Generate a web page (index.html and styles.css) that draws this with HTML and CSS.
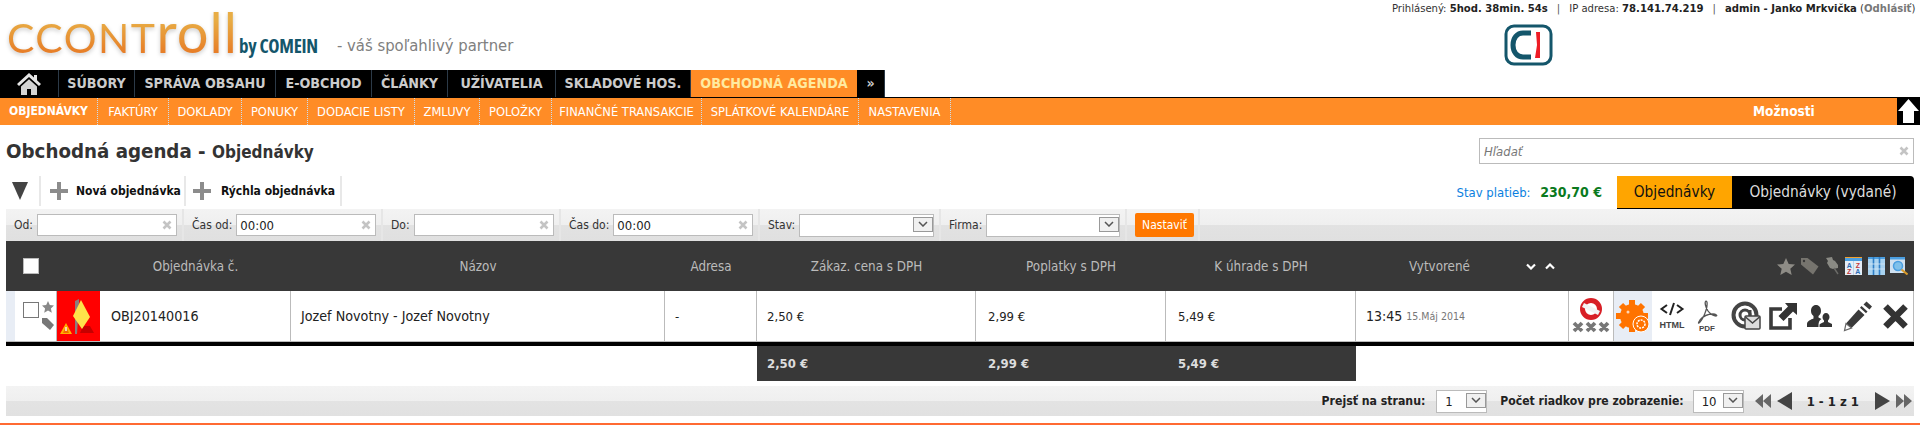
FILE: index.html
```html
<!DOCTYPE html>
<html lang="sk">
<head>
<meta charset="utf-8">
<title>Obchodná agenda - Objednávky</title>
<link rel="stylesheet" href="styles.css">
</head>
<body>
<header class="top">
  <div class="brand">
    <div class="logo"><span class="logo-caps">CCONT</span><span class="logo-low">roll</span></div>
    <div class="by">by COMEIN</div>
    <div class="tagline">- váš spoľahlivý partner</div>
  </div>
  <div class="top-right">
    <div class="session">Prihlásený: <b>5hod. 38min. 54s</b><i>|</i>IP adresa: <b>78.141.74.219</b><i>|</i><b>admin - Janko Mrkvička</b> (<a>Odhlásiť</a>)</div>
    <svg class="ci" viewBox="0 0 49 42"><rect x="2" y="2" width="45" height="38" rx="8" fill="#fff" stroke="#14566b" stroke-width="3"/><path d="M27 9H19C13 9 9 14 9 21s4 12 10 12h8" fill="none" stroke="#14566b" stroke-width="5"/><path d="M32 8h4v26h-5l2-13z" fill="#ee1c25"/></svg>
  </div>
</header>

<nav class="mainnav">
  <a class="m home"><svg viewBox="0 0 26 24" width="26" height="24"><path d="M13 1 1 12l2 2 10-9 10 9 2-2-4-3.700V3h-3v2.500z" fill="#e6e6e6"/><path d="M5 14.500 13 7.300l8 7.200V23h-6v-6h-4v6H5z" fill="#d4d4d4"/></svg></a>
  <a class="m w1">SÚBORY</a>
  <a class="m w2">SPRÁVA OBSAHU</a>
  <a class="m w3">E-OBCHOD</a>
  <a class="m w4">ČLÁNKY</a>
  <a class="m w5">UŽÍVATELIA</a>
  <a class="m w6">SKLADOVÉ HOS.</a>
  <a class="m w7 on">OBCHODNÁ AGENDA</a>
  <a class="m w8">»</a>
</nav>
<nav class="subnav">
  <a class="s bold s1">OBJEDNÁVKY</a>
  <a class="s s2">FAKTÚRY</a>
  <a class="s s3">DOKLADY</a>
  <a class="s s4">PONUKY</a>
  <a class="s s5">DODACIE LISTY</a>
  <a class="s s6">ZMLUVY</a>
  <a class="s s7">POLOŽKY</a>
  <a class="s s8">FINANČNÉ TRANSAKCIE</a>
  <a class="s s9">SPLÁTKOVÉ KALENDÁRE</a>
  <a class="s s10">NASTAVENIA</a>
  <span class="options">Možnosti</span>
  <span class="uparrow"><svg viewBox="0 0 23 27" width="23" height="27"><path d="M11.500 1 22 13h-5v12H6V13H1z" fill="#fff"/></svg></span>
</nav>

<main class="page">
  <div class="titlerow">
    <h1>Obchodná agenda - <small>Objednávky</small></h1>
    <div class="search"><input class="search-input" placeholder="Hľadať"><svg class="clear" viewBox="0 0 10 10"><path d="M1.500 1.500l7 7m0-7-7 7" stroke="#c4c4c4" stroke-width="2.600"/></svg></div>
  </div>

  <div class="toolbar">
    <span class="tool t0"><svg viewBox="0 0 16 18" width="16" height="18"><path d="M0 0h16L8 18z" fill="#444"/></svg></span>
    <a class="tool t1"><svg viewBox="0 0 18 18" width="18" height="18"><path d="M7 0h4v7h7v4h-7v7H7v-7H0V7h7z" fill="#8c8c8c"/></svg><b>Nová objednávka</b></a>
    <a class="tool t2"><svg viewBox="0 0 18 18" width="18" height="18"><path d="M7 0h4v7h7v4h-7v7H7v-7H0V7h7z" fill="#8c8c8c"/></svg><b>Rýchla objednávka</b></a>
    <div class="balance">Stav platieb: <b>230,70 €</b></div>
    <div class="tabs"><a class="tab tab-on">Objednávky</a><a class="tab tab-off">Objednávky (vydané)</a></div>
  </div>

  <div class="filters">
    <label class="f f1">Od:<span class="inp"><input><svg class="clear" viewBox="0 0 10 10"><path d="M1.500 1.500l7 7m0-7-7 7" stroke="#c4c4c4" stroke-width="2.600"/></svg></span></label>
    <label class="f f2">Čas od:<span class="inp"><input value="00:00"><svg class="clear" viewBox="0 0 10 10"><path d="M1.500 1.500l7 7m0-7-7 7" stroke="#c4c4c4" stroke-width="2.600"/></svg></span></label>
    <label class="f f3">Do:<span class="inp"><input><svg class="clear" viewBox="0 0 10 10"><path d="M1.500 1.500l7 7m0-7-7 7" stroke="#c4c4c4" stroke-width="2.600"/></svg></span></label>
    <label class="f f4">Čas do:<span class="inp"><input value="00:00"><svg class="clear" viewBox="0 0 10 10"><path d="M1.500 1.500l7 7m0-7-7 7" stroke="#c4c4c4" stroke-width="2.600"/></svg></span></label>
    <label class="f f5">Stav:<span class="sel wide"><select></select><span class="arr"><svg viewBox="0 0 10 6" width="10" height="6"><path d="M1 1l4 4 4-4" fill="none" stroke="#555" stroke-width="1.500"/></svg></span></span></label>
    <label class="f f6">Firma:<span class="sel wide"><select></select><span class="arr"><svg viewBox="0 0 10 6" width="10" height="6"><path d="M1 1l4 4 4-4" fill="none" stroke="#555" stroke-width="1.500"/></svg></span></span></label>
    <div class="f f7"><button class="set">Nastaviť</button></div>
  </div>

  <div class="grid head">
    <div class="cell c-check"><span class="hcheck"></span></div>
    <div class="cell"></div>
    <div class="cell center">Objednávka č.</div>
    <div class="cell center">Názov</div>
    <div class="cell center">Adresa</div>
    <div class="cell center">Zákaz. cena s DPH</div>
    <div class="cell center">Poplatky s DPH</div>
    <div class="cell center">K úhrade s DPH</div>
    <div class="cell created">Vytvorené
      <span class="sort"><svg viewBox="0 0 10 7" width="10" height="7"><path d="M1 1.500l4 4 4-4" fill="none" stroke="#fff" stroke-width="2.200"/></svg><svg viewBox="0 0 10 7" width="10" height="7"><path d="M1 5.500l4-4 4 4" fill="none" stroke="#fff" stroke-width="2.200"/></svg></span>
    </div>
    <div class="cell hicons">
      <svg class="hi1" viewBox="0 0 18 17" width="18" height="17"><path d="M9 0l2.700 6 6.300.6-4.700 4.200 1.400 6.200L9 13.800 3.300 17l1.400-6.200L0 6.600 6.300 6z" fill="#8e8c86"/></svg>
      <svg class="hi2" viewBox="0 0 19 17" width="19" height="17"><path d="M1 0h6.500L18.500 8.500 13 16.500 1 6.500z" fill="#76746e"/><circle cx="4" cy="3" r="1.200" fill="#383838"/></svg>
      <svg class="hi3" viewBox="0 0 16 18" width="16" height="18"><path d="M1 1l6-1 1 3 2 1 3 4v3l-5 1-3-1-3-5 1-2z" fill="#8a8a84"/><path d="M9 11l4 6" stroke="#6c6c68" stroke-width="1.400"/></svg>
      <svg class="hi4" viewBox="0 0 17 18" width="17" height="18"><rect width="17" height="18" fill="#e6eef7"/><rect width="17" height="4" fill="#4a9ee0"/><rect y="0" width="17" height="1" fill="#f0a030"/><rect x="8" y="4" width="1" height="14" fill="#b9d2e8"/><text class="az blue" x="4.200" y="10.500">A</text><text class="az red" x="12.800" y="10.500">Z</text><text class="az red" x="4.200" y="17">Z</text><text class="az blue" x="12.800" y="17">A</text></svg>
      <svg class="hi5" viewBox="0 0 17 18" width="17" height="18"><rect width="17" height="18" fill="#a9d3f0"/><rect width="17" height="2" fill="#4a9ee0"/><path d="M5.500 0v18M11.500 0v18" stroke="#2f7fc6" stroke-width="1.600"/><path d="M0 7h17M0 12h17" stroke="#d6e8f6" stroke-width=".8"/></svg>
      <svg class="hi6" viewBox="0 0 18 18" width="18" height="18"><rect width="15" height="16" fill="#cfe0f0"/><rect width="15" height="2.500" fill="#4a9ee0"/><circle cx="8" cy="9" r="4.500" fill="#7fc0ea" stroke="#4a9ee0" stroke-width="1.500"/><path d="M11.500 12.500l6 5" stroke="#d89a2a" stroke-width="2"/></svg>
    </div>
  </div>

  <div class="grid row">
    <div class="cell c-check2">
      <span class="rcheck"></span>
      <span class="marks">
        <svg viewBox="0 0 12 12" width="12" height="12"><path d="M6 0l1.800 4 4.200.5-3.100 2.900.9 4.300L6 9.500 2.200 11.700l.9-4.300L0 4.500 4.200 4z" fill="#888"/></svg>
        <svg viewBox="0 0 12 14" width="12" height="14"><path d="M0 1h5l7 7-4 5-8-7z" fill="#777"/></svg>
      </span>
    </div>
    <div class="cell flag"><svg viewBox="0 0 43 50" width="43" height="50">
      <path d="M23 42h14l-4-7-7 0z" fill="#c60000"/>
      <path d="M18 43V10l4-2v4l-2 31z" fill="#8c7d7d"/>
      <path d="M24 9l9 17-8 12-9-13z" fill="#ffe24a"/>
      <path d="M9 32l6 11H3z" fill="#ffb100"/><path d="M9 35l3 7H6z" fill="#f26a00"/><path d="M8.300 36h1.400v4H8.300z" fill="#fff"/>
    </svg></div>
    <div class="cell text line pad big">OBJ20140016</div>
    <div class="cell text line pad2 big">Jozef Novotny - Jozef Novotny</div>
    <div class="cell text line pad2">-</div>
    <div class="cell text line pad3">2,50 €</div>
    <div class="cell text line pad3b">2,99 €</div>
    <div class="cell text line pad3b">5,49 €</div>
    <div class="cell text line pad4"><span class="time">13:45</span> <span class="date">15.Máj 2014</span></div>
    <div class="cell actions">
      <span class="act a0"><svg viewBox="0 0 38 36" width="38" height="36"><circle cx="19" cy="11" r="8.500" fill="none" stroke="#d81f26" stroke-width="5"/><path d="M11 7l16 8" stroke="#f2f2f2" stroke-width="4.500"/><g stroke="#777" stroke-width="3.800"><path d="M2 25l8 8m0-8-8 8M15 25l8 8m0-8-8 8M28 25l8 8m0-8-8 8"/></g></svg></span>
      <span class="act a1"><svg viewBox="0 0 34 34" width="34" height="34"><circle cx="16" cy="17" r="12" fill="#ff7300"/><g stroke="#ff7300" stroke-width="6"><path d="M16 1v32M0 17h32M5 6l22 22M27 6 5 28"/></g><circle cx="25" cy="25" r="8" fill="#ff7300" stroke="#fff"/><circle cx="25" cy="25" r="4" fill="none" stroke="#fff" stroke-width="1.500" stroke-dasharray="2 1"/><circle cx="12" cy="13" r="1.500" fill="#fff" opacity=".7"/></svg></span>
      <span class="act a2"><svg viewBox="0 0 26 30" width="26" height="30"><path d="M8 4 2.500 8 8 12M18 4l5.500 4L18 12M15 2l-4 12" fill="none" stroke="#222" stroke-width="2"/><text x="13" y="27" class="itxt html">HTML</text></svg></span>
      <span class="act a3"><svg viewBox="0 0 22 32" width="22" height="32"><path d="M10 1c-2 1 0 7 2 10 2 3 6 5 8 5s0-2-3-2-9 1-13 6c-2 3-2 4 0 2 3-3 8-14 7-20z" fill="none" stroke="#555" stroke-width="1.300"/><text x="11" y="31" class="itxt pdf">PDF</text></svg></span>
      <span class="act a4"><svg viewBox="0 0 30 30" width="30" height="30"><circle cx="14" cy="14" r="11.500" fill="none" stroke="#444" stroke-width="4"/><circle cx="14" cy="14" r="5" fill="none" stroke="#444" stroke-width="3"/><path d="M19 9v9" stroke="#444" stroke-width="3"/><rect x="14" y="15" width="15" height="13" rx="1" fill="#ddd" stroke="#444" stroke-width="1.500"/><path d="M14.500 16l7 6 7-6" fill="none" stroke="#444" stroke-width="1.500"/></svg></span>
      <span class="act a5"><svg viewBox="0 0 28 28" width="28" height="28"><path d="M13 7H2v19h19V16" fill="none" stroke="#3a3a3a" stroke-width="3.600"/><path d="M16 1h12v12l-4-3.500-9.500 9.500-5-5L19 4.500z" fill="#333"/></svg></span>
      <span class="act a6"><svg viewBox="0 0 25 22" width="25" height="22"><path d="M9 0c3 0 5 2.500 5 6 0 2-1 4-2.500 5v1.500l3 1.500c-2 1-3 3-3 6v2H0v-3c0-3 4-4.500 6.500-5.500V11C5 10 4 8 4 6c0-3.500 2-6 5-6z" fill="#333"/><path d="M19 8c2 0 3.500 1.700 3.500 4 0 1.500-.7 2.700-1.500 3.500V17l4 2v3H12.500v-2c0-1 1-1.500 4.500-3v-1.500C16 14.700 15.500 13.500 15.500 12c0-2.300 1.500-4 3.500-4z" fill="#333"/></svg></span>
      <span class="act a7"><svg viewBox="0 0 30 32" width="30" height="32"><path d="M23.500 1.500l5.500 5-2.500 3-6-5z" fill="#3a3a3a"/><path d="M18.500 6l6 5.500-1.500 1.700-6-5.500z" fill="#3a3a3a"/><path d="M15.500 9.500l6 5.500L8.500 28l-5.500-4.500z" fill="#3a3a3a"/><path d="M3 23.500l5.500 4.500-7 2.500z" fill="#fff" stroke="#666" stroke-width="1.200"/></svg></span>
      <span class="act a8"><svg viewBox="0 0 27 27" width="27" height="27"><path d="M3.500 3.500l20 20m0-20-20 20" stroke="#333" stroke-width="6.500"/></svg></span>
    </div>
  </div>
  <div class="rowend"></div>

  <div class="grid totals">
    <div class="tot-gap"></div>
    <div class="tot">2,50 €</div>
    <div class="tot tot2">2,99 €</div>
    <div class="tot tot2">5,49 €</div>
  </div>

  <div class="pager">
    <b class="goto">Prejsť na stranu:</b>
    <span class="sel small"><select><option>1</option></select><span class="arr"><svg viewBox="0 0 10 6" width="10" height="6"><path d="M1 1l4 4 4-4" fill="none" stroke="#555" stroke-width="1.500"/></svg></span></span>
    <b class="rows">Počet riadkov pre zobrazenie:</b>
    <span class="sel small"><select><option>10</option></select><span class="arr"><svg viewBox="0 0 10 6" width="10" height="6"><path d="M1 1l4 4 4-4" fill="none" stroke="#555" stroke-width="1.500"/></svg></span></span>
    <svg class="pg-first" viewBox="0 0 38 18" width="38" height="18"><path d="M0 9l8-7v14zM8 9l8-7v14z" fill="#666"/><path d="M22 9l15-9v18z" fill="#444"/></svg>
    <b class="count">1 - 1 z 1</b>
    <svg viewBox="0 0 38 18" width="38" height="18"><path d="M1 0l15 9-15 9z" fill="#444"/><path d="M22 2l8 7-8 7zM30 2l8 7-8 7z" fill="#666"/></svg>
  </div>
</main>
<div class="footline"></div>
</body>
</html>
```
FILE: styles.css
```css
* { box-sizing: border-box; }
html, body { margin: 0; padding: 0; background: #fff; height: 429px; overflow: hidden; }
body { font-family: "DejaVu Sans", "Liberation Sans", sans-serif; font-stretch: condensed; font-size: 12px; color: #222; }
a { text-decoration: none; color: inherit; }

.top { height: 70px; display: flex; justify-content: space-between; }
.brand { flex: 1; display: flex; align-items: flex-start; padding: 0 0 0 7px; }
.logo { font-family: Lato, sans-serif; width: 226px; line-height: 64px; background: linear-gradient(#e8ad45 25%, #e76c1c 80%); -webkit-background-clip: text; background-clip: text; color: transparent; filter: drop-shadow(0 2px 2px #ccc); white-space: nowrap; }
.logo-caps { font-size: 41px; letter-spacing: 1.500px; }
.logo-low { font-size: 56px; letter-spacing: 1px; }
.by { margin: 34px 0 0 6px; font-family: "Open Sans", sans-serif; font-weight: 700; font-size: 19px; letter-spacing: -.3px; line-height: 24px; color: #14566b; width: 92px; white-space: nowrap; }
.tagline { margin: 34px 0 0 6px; font-size: 16.500px; line-height: 24px; color: #808080; white-space: nowrap; }
.top-right { width: 528px; display: flex; flex-direction: column; }
.session { height: 18px; line-height: 18px; font-size: 11.200px; white-space: nowrap; color: #333; text-align: right; padding-right: 5px; }
.session b { color: #222; }
.session i { font-style: normal; margin: 0 9px; color: #555; }
.session a { color: #777; font-weight: 700; }
.ci { width: 49px; height: 42px; margin: 6px 0 0 112px; }

.mainnav { height: 28px; display: flex; border-bottom: 1px solid #000; }
.m { height: 27px; line-height: 27px; background: #000; color: #ccc; font-weight: 700; font-size: 14.200px; text-align: center; border-right: 1px solid #2c3a48; white-space: nowrap; }
.home { width: 59px; padding-top: 2px; display: flex; justify-content: center; }
.w1 { width: 76px; } .w2 { width: 141px; } .w3 { width: 96px; } .w4 { width: 76px; } .w5 { width: 108px; } .w6 { width: 135px; }
.w7 { width: 166px; background: #ff8c26; color: #ffeaa0; border-right: 0; }
.w8 { width: 28px; font-size: 14px; }

.subnav { height: 27px; display: flex; background: #ff8c26; color: #fff; font-size: 12.800px; line-height: 27px; }
.s { text-align: center; border-right: 1px dotted #cde; white-space: nowrap; }
.bold { font-weight: 700; font-size: 12px; }
.s1 { width: 98px; } .s2 { width: 71px; } .s3 { width: 73px; } .s4 { width: 66px; } .s5 { width: 107px; } .s6 { width: 65px; } .s7 { width: 72px; } .s8 { width: 150px; } .s9 { width: 157px; } .s10 { width: 92px; }
.options { margin-left: auto; width: 144px; font-weight: 700; font-size: 13.500px; }
.uparrow { width: 23px; height: 27px; background: #000; }
.uparrow svg { display: block; }

.page { padding: 0 6px; }
.titlerow { height: 51px; display: flex; justify-content: space-between; align-items: flex-start; }
h1 { margin: 14px 0 0; font-size: 20.300px; line-height: 24px; font-weight: 700; color: #333; }
h1 small { font-size: 17px; }
.search { position: relative; width: 435px; margin-top: 13px; }
.search-input { width: 100%; height: 26px; border: 1px solid #bbb; padding: 0 20px 0 4px; font: italic 13px "DejaVu Sans", sans-serif; font-stretch: condensed; outline: 0; }
.search-input::placeholder { color: #777; opacity: 1; }
.clear { position: absolute; right: 5px; top: 50%; width: 10px; height: 10px; margin-top: -5px; }

.toolbar { height: 33px; display: flex; align-items: stretch; }
.tool { display: flex; align-items: center; height: 30px; border-right: 2px solid #e8e8e8; }
.tool b { font-size: 12px; color: #111; }
.t0 { width: 35px; padding-left: 6px; }
.t1 { width: 145px; padding-left: 9px; gap: 8px; }
.t2 { width: 156px; padding-left: 7px; gap: 10px; }
.balance { margin-left: auto; line-height: 32px; color: #0a7fe0; font-size: 13px; white-space: nowrap; }
.balance b { color: #0a7a1e; font-size: 14px; margin-left: 6px; }
.tabs { display: flex; margin-left: 15px; height: 33px; border-bottom: 1px solid #000; }
.tab { display: block; line-height: 32px; font-size: 15.300px; text-align: center; }
.tab-on { width: 115px; background: #ffa500; color: #111; }
.tab-off { width: 182px; background: #000; color: #ddd; border-top-right-radius: 4px; }

.filters { height: 32px; display: flex; background: linear-gradient(#f3f3f3, #efefef 50%, #e2e2e2 50%, #e0e0e0); }
.f { display: flex; align-items: center; gap: 4px; padding-left: 8px; border-right: 2px solid #e6e6e6; white-space: nowrap; color: #333; }
.f1 { width: 178px; } .f2 { width: 199px; } .f3 { width: 178px; } .f4 { width: 199px; } .f5 { width: 181px; } .f6 { width: 186px; } .f7 { width: 73px; }
.inp { position: relative; flex: 1; margin-right: 5px; }
.inp input { display: block; width: 100%; height: 22px; border: 1px solid #bbb; background: #fff; padding: 0 2px 0 3px; font: 13px "DejaVu Sans", sans-serif; font-stretch: condensed; color: #222; outline: 0; }
.sel { position: relative; display: block; background: #fff; border: 1px solid #bbb; }
.sel select { display: block; width: 100%; height: 100%; border: 0; background: transparent; appearance: none; -webkit-appearance: none; padding: 0 0 0 6px; font: 13px "DejaVu Sans", sans-serif; font-stretch: condensed; color: #222; outline: 0; }
.arr { position: absolute; right: 0; top: 2px; width: 20px; height: 15px; background: #f0f0f0; border: 1px solid #999; display: flex; align-items: center; justify-content: center; }
.wide { flex: 1; height: 23px; margin-right: 5px; }
.set { width: 59px; height: 24px; background: #ff7800; color: #fff; border: 0; border-radius: 2px; font: 12px "DejaVu Sans", sans-serif; font-stretch: condensed; padding: 0; }

.grid { display: grid; grid-template-columns: 51px 43px 191px 374px 92px 219px 190px 190px 213px 345px; }
.cell { min-width: 0; display: flex; align-items: center; }
.head { height: 50px; background: #383838; color: #bbb; font-size: 13.300px; }
.center { justify-content: center; }
.c-check { padding-left: 17px; }
.hcheck { width: 16px; height: 16px; background: #fff; border: 1px solid #bbb; }
.created { padding-left: 53px; }
.sort { display: flex; gap: 9px; margin-left: 56px; }
.hicons { justify-content: flex-end; padding-right: 6px; }
.hi1 { margin-right: 5px; } .hi2 { margin-right: 6px; } .hi3 { margin-right: 4px; } .hi4 { margin-right: 6px; } .hi5 { margin-right: 5px; }
.az { font: 700 7px "Liberation Sans", sans-serif; text-anchor: middle; }
.az.blue { fill: #2f6fb5; } .az.red { fill: #c43a3a; }

.row { height: 51px; border-bottom: 1px solid #bbb; border-right: 1px solid #bbb; font-size: 13px; color: #222; }
.c-check2 { background: linear-gradient(90deg, #e8edf5 9px, #fff 9px); border-right: 1px solid #bbb; gap: 3px; padding-left: 17px; }
.rcheck { width: 16px; height: 16px; border: 1.500px solid #777; background: #fff; align-self: flex-start; margin-top: 11px; }
.marks { display: flex; flex-direction: column; gap: 4px; }
.marks svg { display: block; }
.flag { background: #f00; width: 43px; height: 50px; }
.flag svg { display: block; }
.line { border-right: 1px solid #bbb; }
.big { font-size: 14.200px; }
.pad { padding-left: 11px; }
.pad2 { padding-left: 10px; }
.pad3 { padding-left: 10px; }
.pad3b { padding-left: 12px; }
.pad4 { padding-left: 10px; gap: 4px; }
.time { font-size: 14px; }
.date { font-size: 10.500px; color: #777; }
.actions { height: 50px; }
.act { display: flex; flex: none; align-items: center; justify-content: center; height: 50px; }
.act svg { display: block; flex: none; }
.a0 { width: 44px; }
.a1 { width: 39px; background: #e8edf5; border-left: 1px solid #bbb; }
.a2 { width: 40px; } .a3 { width: 30px; } .a4 { width: 47px; } .a5 { width: 27px; } .a6 { width: 47px; } .a7 { width: 29px; } .a8 { width: 42px; padding-left: 4px; }
.itxt { font-family: "Liberation Sans", sans-serif; font-weight: 700; text-anchor: middle; fill: #444; }
.html { font-size: 9px; }
.pdf { font-size: 8px; }
.rowend { height: 4px; background: #000; }

.totals { height: 35px; }
.tot-gap { grid-column: 1 / span 5; }
.tot { background: #383838; color: #ddd; font-size: 13px; font-weight: 700; line-height: 35px; padding-left: 10px; }
.tot2 { padding-left: 12px; }

.pager { height: 30px; margin-top: 5px; display: flex; align-items: center; justify-content: flex-end; background: linear-gradient(#f3f3f3, #efefef 50%, #e3e3e3 50%, #e1e1e1); font-size: 12.200px; color: #222; gap: 11px; padding-right: 2px; }
.rows { font-size: 12.100px; margin: 0 -2px 0 2px; }
.small { width: 51px; height: 23px; }
.small select { padding-left: 8px; }
.pg-first { margin-right: -1px; }
.count { margin: 0 4px; font-weight: 700; font-size: 13px; }
.footline { height: 2px; margin-top: 7px; background: #ff6a33; }
```
